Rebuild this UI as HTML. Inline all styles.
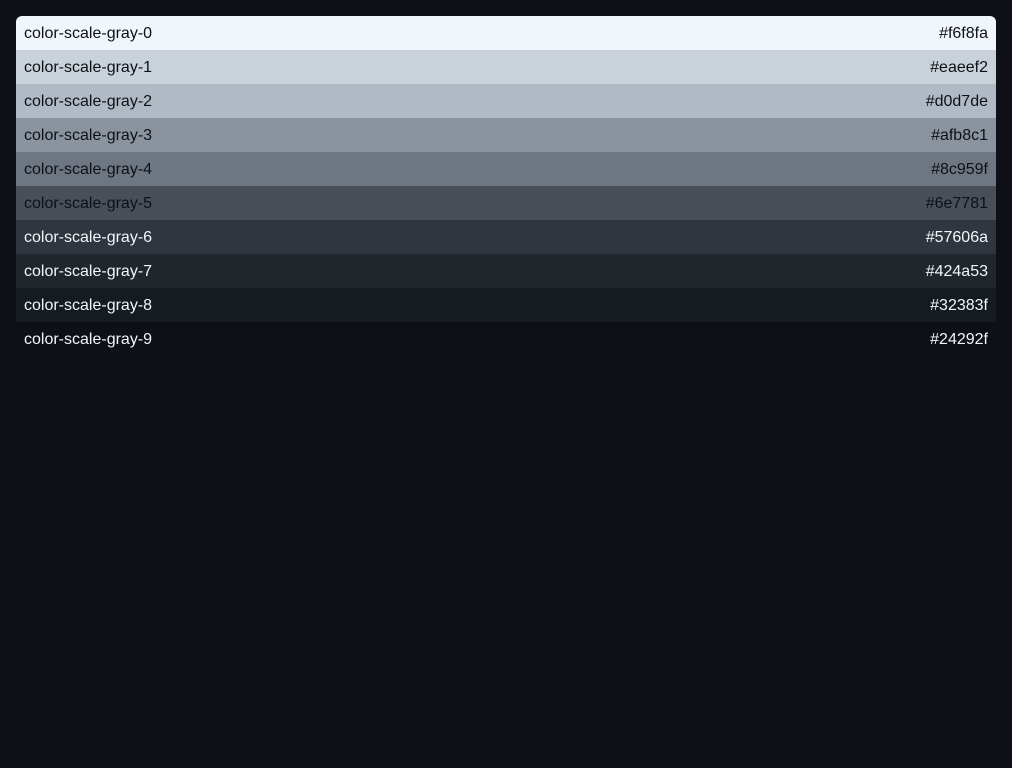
<!DOCTYPE html>
<html><head><style>
html,body{margin:0;padding:0;background:#0d1117;width:1012px;height:768px;overflow:hidden}
.wrap{position:absolute;left:16px;top:16px;width:980px;border-radius:6px 6px 0 0;overflow:hidden}
.r{height:34px;box-sizing:border-box;display:flex;justify-content:space-between;padding:9px 8px 0;line-height:18px;font-family:"Liberation Sans",Arial,sans-serif;font-size:16px}
</style></head><body><div class="wrap">
<div class="r" style="background:#f0f6fc;color:#0d1117"><span>color-scale-gray-0</span><span>#f6f8fa</span></div>
<div class="r" style="background:#c9d1d9;color:#0d1117"><span>color-scale-gray-1</span><span>#eaeef2</span></div>
<div class="r" style="background:#b1bac4;color:#0d1117"><span>color-scale-gray-2</span><span>#d0d7de</span></div>
<div class="r" style="background:#8b949e;color:#0d1117"><span>color-scale-gray-3</span><span>#afb8c1</span></div>
<div class="r" style="background:#6e7681;color:#0d1117"><span>color-scale-gray-4</span><span>#8c959f</span></div>
<div class="r" style="background:#484f58;color:#0d1117"><span>color-scale-gray-5</span><span>#6e7781</span></div>
<div class="r" style="background:#30363d;color:#f0f6fc"><span>color-scale-gray-6</span><span>#57606a</span></div>
<div class="r" style="background:#21262d;color:#f0f6fc"><span>color-scale-gray-7</span><span>#424a53</span></div>
<div class="r" style="background:#161b22;color:#f0f6fc"><span>color-scale-gray-8</span><span>#32383f</span></div>
<div class="r" style="background:#0d1117;color:#f0f6fc"><span>color-scale-gray-9</span><span>#24292f</span></div>
</div></body></html>
